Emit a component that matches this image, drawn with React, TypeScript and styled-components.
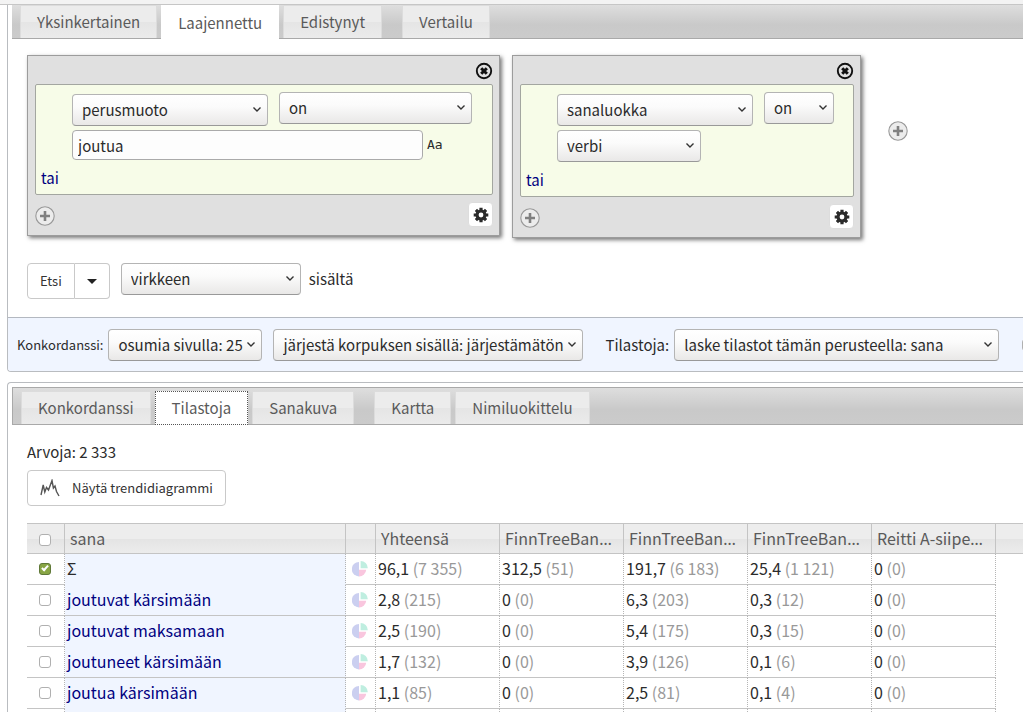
import React from "react";
import styled, { createGlobalStyle, css } from "styled-components";

const GlobalStyle = createGlobalStyle`
  *, *::before, *::after { box-sizing: border-box; }
  html { overflow: hidden; }
  body {
    margin: 0;
    background: #fff;
    color: #2b2b2b;
    font-family: "Noto Sans CJK SC", "Noto Sans", sans-serif;
    font-size: 15px;
    line-height: 20px;
  }
  button, input, select { font: inherit; color: inherit; margin: 0; }
`;

const Page = styled.div`
  overflow: hidden;
  height: 100vh;
`;

const TopStrip = styled.header`
  height: 5px;
  background: #f3f3f3;
  border-bottom: 1px solid #c6c6c6;
`;

const Panel = styled.section<{ $joined?: boolean }>`
  margin-left: 7px;
  border: solid #b9bcc0;
  border-width: ${(p) => (p.$joined ? "0 0 1px 1px" : "1px 0 0 1px")};
  border-radius: ${(p) => (p.$joined ? "0 0 0 4px" : "4px 0 0 0")};
  overflow: hidden;
`;

const TabBar = styled.nav<{ $bordered?: boolean }>`
  display: flex;
  align-items: flex-end;
  gap: 4px;
  height: ${(p) => (p.$bordered ? 38 : 34)}px;
  margin: ${(p) => (p.$bordered ? "4px 0 0 4px" : "0 0 0 4px")};
  padding-left: 8px;
  border: solid #a9a9a9;
  border-width: ${(p) => (p.$bordered ? "1px 0 1px 1px" : "0 0 1px 0")};
  background: linear-gradient(#dedede, #c9c9c9 60%, #cbcbcb);
`;

const Tab = styled.button<{ $active?: boolean; $focused?: boolean; $apart?: boolean }>`
  height: 33px;
  margin: 0 0 0 ${(p) => (p.$apart ? 16 : 0)}px;
  padding: 0 16px;
  border: 1px solid #dcdcdc;
  border-bottom-width: 0;
  background: linear-gradient(#ececec 50%, #e5e5e5 51%, #ebebeb);
  color: #5a5a5a;
  white-space: nowrap;
  ${(p) =>
    p.$active &&
    css`
      background: #fff;
      border-color: #fff;
      height: 34px;
      margin-bottom: -1px;
    `}
  ${(p) => p.$focused && css`border: 1px dotted #555;`}
`;

const SearchArea = styled.div`
  padding: 16px 0 18px 19px;
`;

const Tokens = styled.div`
  display: flex;
  align-items: flex-start;
  gap: 12px;
`;

const TokenBox = styled.div<{ $width: number }>`
  width: ${(p) => p.$width}px;
  padding: 6px 6px 8px 7px;
  background: #e0e0e0;
  border: 1px solid #9c9c9c;
  box-shadow: 2px 2px 4px #777;
`;

const TokenHead = styled.div`
  display: flex;
  justify-content: flex-end;
  height: 22px;
`;

const TokenFoot = styled.div`
  display: flex;
  justify-content: space-between;
  align-items: flex-start;
  padding-top: 7px;
`;

const IconButton = styled.button`
  display: grid;
  place-items: center;
  width: 20px;
  height: 20px;
  padding: 0;
  border: 0;
  background: none;
`;

const CloseButton = styled(IconButton)`
  width: 18px;
  height: 18px;
`;

const GearButton = styled(IconButton)`
  width: 25px;
  height: 25px;
  background: #fff;
  border: 1px solid #ddd;
  border-radius: 4px;
`;

const AddHolder = styled.div`
  padding: 66px 0 0 15px;
`;

const FootAdd = styled.div`
  padding-top: 4px;
`;

const Condition = styled.div`
  padding: 7px 0 6px 5px;
  border: 1px solid #a3a6a0;
  border-radius: 2px;
  background: #f7fce8;
`;

const Fields = styled.div`
  padding-left: 31px;
`;

const FieldRow = styled.div`
  display: flex;
  gap: 11px;
`;

const Attribute = styled.div`
  padding-top: 2px;
`;

const ValueRow = styled.div`
  display: flex;
  align-items: center;
  gap: 4px;
  padding-top: 4px;
`;

const TextField = styled.input`
  width: 351px;
  height: 30px;
  padding: 0 5px;
  border: 1px solid #aaa;
  border-radius: 4px;
  background: #fdfdfd;
`;

const CaseToggle = styled.button`
  padding: 0;
  border: 0;
  background: none;
  font-family: "DejaVu Sans Mono", monospace;
  font-size: 13px;
`;

const OrLink = styled.a`
  display: block;
  width: max-content;
  margin-top: 8px;
  color: #000080;
  text-decoration: none;
`;

const SelectShell = styled.span<{ $width: number }>`
  display: inline-grid;
  flex: none;
  width: ${(p) => p.$width}px;
  height: 32px;
  vertical-align: top;
  & > * { grid-area: 1 / 1; }
  & > svg { place-self: center end; margin-right: 6px; pointer-events: none; }
`;

const NativeSelect = styled.select`
  appearance: none;
  width: 100%;
  height: 100%;
  padding: 0 16px 0 9px;
  border: 1px solid #b4b4b4;
  border-bottom-color: #999;
  border-radius: 4px;
  background: linear-gradient(#fff, #fbfbfb 40%, #e9e8e7);
`;

const SearchRow = styled.div`
  display: flex;
  align-items: flex-start;
  gap: 11px;
  padding-top: 25px;
`;

const Joined = styled.div`
  display: flex;
`;

const PlainButton = styled.button`
  display: flex;
  align-items: center;
  gap: 12px;
  height: 36px;
  padding: 0 12px;
  border: 1px solid #c9c9c9;
  border-radius: 4px;
  background: #fff;
  font-size: 13px;
  color: #333;
  ${Joined} > &:first-child { border-radius: 4px 0 0 4px; }
  ${Joined} > & + & { border-radius: 0 4px 4px 0; border-left: 0; }
`;

const Within = styled.label`
  display: flex;
  align-items: center;
  gap: 8px;
`;

const Options = styled.div`
  display: flex;
  align-items: center;
  height: 54px;
  padding-left: 9px;
  border-top: 1px solid #b3b8c0;
  background: #f0f5ff;
`;

const Option = styled.label<{ $gap?: number }>`
  display: flex;
  flex: none;
  align-items: center;
  gap: 5px;
  margin-left: ${(p) => p.$gap || 0}px;
`;

const OptionCaption = styled.span<{ $small?: boolean }>`
  font-size: ${(p) => (p.$small ? 13 : 15)}px;
`;

const Check = styled.input`
  appearance: none;
  display: block;
  flex: none;
  width: 12px;
  height: 12px;
  border: 1px solid #b0b0b0;
  border-radius: 3px;
  background: #fff;
  &:checked { background: #88a544; border-color: #5f7838; }
  &:checked::before {
    content: "";
    display: block;
    width: 4px;
    height: 7px;
    margin: 0 0 0 3px;
    border: solid #fff;
    border-width: 0 2px 2px 0;
    transform: rotate(42deg);
  }
`;

const Results = styled.div`
  padding: 17px 0 0 19px;
`;

const Count = styled.p`
  margin: 0 0 8px;
`;

const Grid = styled.table`
  width: 100%;
  margin-top: 17px;
  table-layout: fixed;
  border-collapse: separate;
  border-spacing: 0;
  font-size: 16px;
`;

/* The cell's own font sets the truncation dots, which sit on the baseline in Noto Sans. */
const HeadCell = styled.th<{ $last?: boolean }>`
  height: 31px;
  padding: 0 5px;
  overflow: hidden;
  text-overflow: ellipsis;
  white-space: nowrap;
  text-align: left;
  font-family: "Noto Sans", sans-serif;
  font-weight: 400;
  color: #5a5a5a;
  border: solid #c4c4c4;
  border-width: 1px ${(p) => (p.$last ? 0 : 1)}px 1px 0;
  background: linear-gradient(#ededed 50%, #e4e4e4 52%, #ececec);
`;

const HeadText = styled.span`
  font-family: "Noto Sans CJK SC", "Noto Sans", sans-serif;
`;

const Cell = styled.td<{ $word?: boolean; $rule?: boolean }>`
  height: 31px;
  padding: 0 2px 3px;
  white-space: nowrap;
  border-right: 1px dotted #b5b5b5;
  border-bottom: 1px solid ${(p) => (p.$rule === false ? "#f0f5ff" : "#c4c4c4")};
  background: ${(p) => (p.$word ? "#f0f5ff" : "#fff")};
`;

const Centered = styled.div`
  display: grid;
  place-items: center;
  padding: 2px 2px 0 0;
`;

const WordLink = styled.a`
  color: #000080;
  text-decoration: none;
`;

const Absolute = styled.span`
  color: #999;
`;

const Spaced = styled.main`
  padding-top: 10px;
`;

const Chevron = () => (
  <svg width="10" height="10" viewBox="0 0 10 10" fill="none" stroke="#333" strokeWidth="1.4">
    <path d="M1.5 2.5 5 6l3.5-3.5" />
  </svg>
);

const PlusIcon = () => (
  <svg width="20" height="20" viewBox="0 0 20 20">
    <circle cx="10" cy="10" r="9.2" fill="#ececec" stroke="#999" strokeWidth="1.1" />
    <path d="M10 5v10M5 10h10" stroke="#808080" strokeWidth="2.6" />
  </svg>
);

const CloseIcon = () => (
  <svg width="18" height="18" viewBox="0 0 18 18" fill="none" stroke="#111">
    <circle cx="9" cy="9" r="7.2" strokeWidth="1.9" />
    <path d="m6.2 6.2 5.6 5.6M11.8 6.2l-5.6 5.6" strokeWidth="3" />
  </svg>
);

const GearIcon = () => (
  <svg width="16" height="16" viewBox="0 0 16 16">
    <g stroke="#2b2b2b" strokeWidth="3.2">
      <path d="M8 .7v14.6M.7 8h14.6M2.9 2.9l10.2 10.2M13.1 2.9 2.9 13.1" />
    </g>
    <circle cx="8" cy="8" r="5.5" fill="#2b2b2b" />
    <circle cx="8" cy="8" r="2.4" fill="#fff" />
  </svg>
);

const TrendIcon = () => (
  <svg width="20" height="18" viewBox="0 0 20 18" fill="none" stroke="#555" strokeWidth="1.4">
    <path d="M1 16 3.2 6 4.8 13 6.5 8.5 8.5 11 12 1.5 13.4 9 15 7l1.5 5.5L19 17" />
  </svg>
);

const PieIcon = () => (
  <svg width="16" height="16" viewBox="0 0 16 16">
    <path d="M7 1a7.2 7.2 0 1 0 0 14.4z" fill="#cbcff0" />
    <path d="M7 8.8h7.2A7 7 0 0 1 7 15.4z" fill="#f9c6de" />
    <path d="M8.6 0a7.2 7.2 0 0 1 7.2 7.2H8.6z" fill="#bfeee0" />
  </svg>
);

const Caret = () => (
  <svg width="10" height="5" viewBox="0 0 10 5">
    <path d="M0 0h10L5 5z" fill="#222" />
  </svg>
);

function Dropdown({ value, width, label }: { value: string; width: number; label?: string }) {
  return (
    <SelectShell $width={width}>
      <NativeSelect aria-label={label}>
        <option>{value}</option>
      </NativeSelect>
      <Chevron />
    </SelectShell>
  );
}

type TokenProps = {
  width: number;
  attribute: string;
  operatorWidth: number;
  children: React.ReactNode;
};

function Token({ width, attribute, operatorWidth, children }: TokenProps) {
  return (
    <TokenBox $width={width}>
      <TokenHead>
        <CloseButton aria-label="Poista"><CloseIcon /></CloseButton>
      </TokenHead>
      <Condition>
        <Fields>
          <FieldRow>
            <Attribute>
              <Dropdown value={attribute} width={196} label="Attribuutti" />
            </Attribute>
            <Dropdown value="on" width={operatorWidth} label="Vertailu" />
          </FieldRow>
          <ValueRow>{children}</ValueRow>
        </Fields>
        <OrLink href="#tai">tai</OrLink>
      </Condition>
      <TokenFoot>
        <FootAdd>
          <IconButton aria-label="Lisää ehto"><PlusIcon /></IconButton>
        </FootAdd>
        <GearButton aria-label="Asetukset"><GearIcon /></GearButton>
      </TokenFoot>
    </TokenBox>
  );
}

const columns = [
  "Yhteensä",
  "FinnTreeBank 1",
  "FinnTreeBank 2",
  "FinnTreeBank 3",
  "Reitti A-siipeen (kirja)",
];

const rows: { word: string; values: [string, string][] }[] = [
  { word: "Σ", values: [["96,1", "7 355"], ["312,5", "51"], ["191,7", "6 183"], ["25,4", "1 121"], ["0", "0"]] },
  { word: "joutuvat kärsimään", values: [["2,8", "215"], ["0", "0"], ["6,3", "203"], ["0,3", "12"], ["0", "0"]] },
  { word: "joutuvat maksamaan", values: [["2,5", "190"], ["0", "0"], ["5,4", "175"], ["0,3", "15"], ["0", "0"]] },
  { word: "joutuneet kärsimään", values: [["1,7", "132"], ["0", "0"], ["3,9", "126"], ["0,1", "6"], ["0", "0"]] },
  { word: "joutua kärsimään", values: [["1,1", "85"], ["0", "0"], ["2,5", "81"], ["0,1", "4"], ["0", "0"]] },
];

function SearchPanel() {
  return (
    <Panel $joined>
      <TabBar>
        <Tab>Yksinkertainen</Tab>
        <Tab $active>Laajennettu</Tab>
        <Tab>Edistynyt</Tab>
        <Tab $apart>Vertailu</Tab>
      </TabBar>
      <SearchArea>
        <Tokens>
          <Token width={473} attribute="perusmuoto" operatorWidth={193}>
            <TextField defaultValue="joutua" aria-label="Arvo" />
            <CaseToggle>Aa</CaseToggle>
          </Token>
          <Token width={349} attribute="sanaluokka" operatorWidth={70}>
            <Dropdown value="verbi" width={144} label="Arvo" />
          </Token>
          <AddHolder>
            <IconButton aria-label="Lisää sana"><PlusIcon /></IconButton>
          </AddHolder>
        </Tokens>
        <SearchRow>
          <Joined>
            <PlainButton>Etsi</PlainButton>
            <PlainButton aria-label="Lisää hakutapoja"><Caret /></PlainButton>
          </Joined>
          <Within>
            <Dropdown value="virkkeen" width={180} />
            sisältä
          </Within>
        </SearchRow>
      </SearchArea>
      <Options>
        <Option>
          <OptionCaption $small>Konkordanssi:</OptionCaption>
          <Dropdown value="osumia sivulla: 25" width={154} />
        </Option>
        <Option $gap={11}>
          <Dropdown value="järjestä korpuksen sisällä: järjestämätön" width={310} label="Järjestys" />
        </Option>
        <Option $gap={22}>
          <OptionCaption>Tilastoja:</OptionCaption>
          <Dropdown value="laske tilastot tämän perusteella: sana" width={325} />
        </Option>
        <Option $gap={23}>
          <Check type="checkbox" aria-label="Suhteelliset luvut" />
        </Option>
      </Options>
    </Panel>
  );
}

function StatisticsTable() {
  return (
    <Grid>
      <colgroup>
        <col width="38" />
        <col width="281" />
        <col width="30" />
        {columns.map((c) => <col key={c} width="124" />)}
        <col />
      </colgroup>
      <thead>
        <tr>
          <HeadCell>
            <Centered><Check type="checkbox" aria-label="Valitse kaikki" /></Centered>
          </HeadCell>
          <HeadCell><HeadText>sana</HeadText></HeadCell>
          <HeadCell />
          {columns.map((c) => <HeadCell key={c}><HeadText>{c}</HeadText></HeadCell>)}
          <HeadCell $last />
        </tr>
      </thead>
      <tbody>
        {rows.map((row, i) => (
          <tr key={row.word}>
            <Cell>
              <Centered>
                <Check type="checkbox" defaultChecked={i === 0} aria-label={row.word} />
              </Centered>
            </Cell>
            <Cell $word $rule={i % 2 === 1}>
              {i === 0 ? row.word : <WordLink href="#konkordanssi">{row.word}</WordLink>}
            </Cell>
            <Cell><Centered><PieIcon /></Centered></Cell>
            {row.values.map(([relative, absolute], c) => (
              <Cell key={c}>
                {relative} <Absolute>({absolute})</Absolute>
              </Cell>
            ))}
          </tr>
        ))}
        <tr>
          <Cell />
          <Cell $word />
          <Cell />
          {columns.map((c) => <Cell key={c} />)}
        </tr>
      </tbody>
    </Grid>
  );
}

function ResultPanel() {
  return (
    <Spaced>
      <Panel>
        <TabBar $bordered>
          <Tab>Konkordanssi</Tab>
          <Tab $active $focused>Tilastoja</Tab>
          <Tab>Sanakuva</Tab>
          <Tab $apart>Kartta</Tab>
          <Tab>Nimiluokittelu</Tab>
        </TabBar>
        <Results>
          <Count>Arvoja: 2 333</Count>
          <PlainButton>
            <TrendIcon />
            Näytä trendidiagrammi
          </PlainButton>
          <StatisticsTable />
        </Results>
      </Panel>
    </Spaced>
  );
}

export default function App() {
  return (
    <Page>
      <GlobalStyle />
      <TopStrip />
      <SearchPanel />
      <ResultPanel />
    </Page>
  );
}
